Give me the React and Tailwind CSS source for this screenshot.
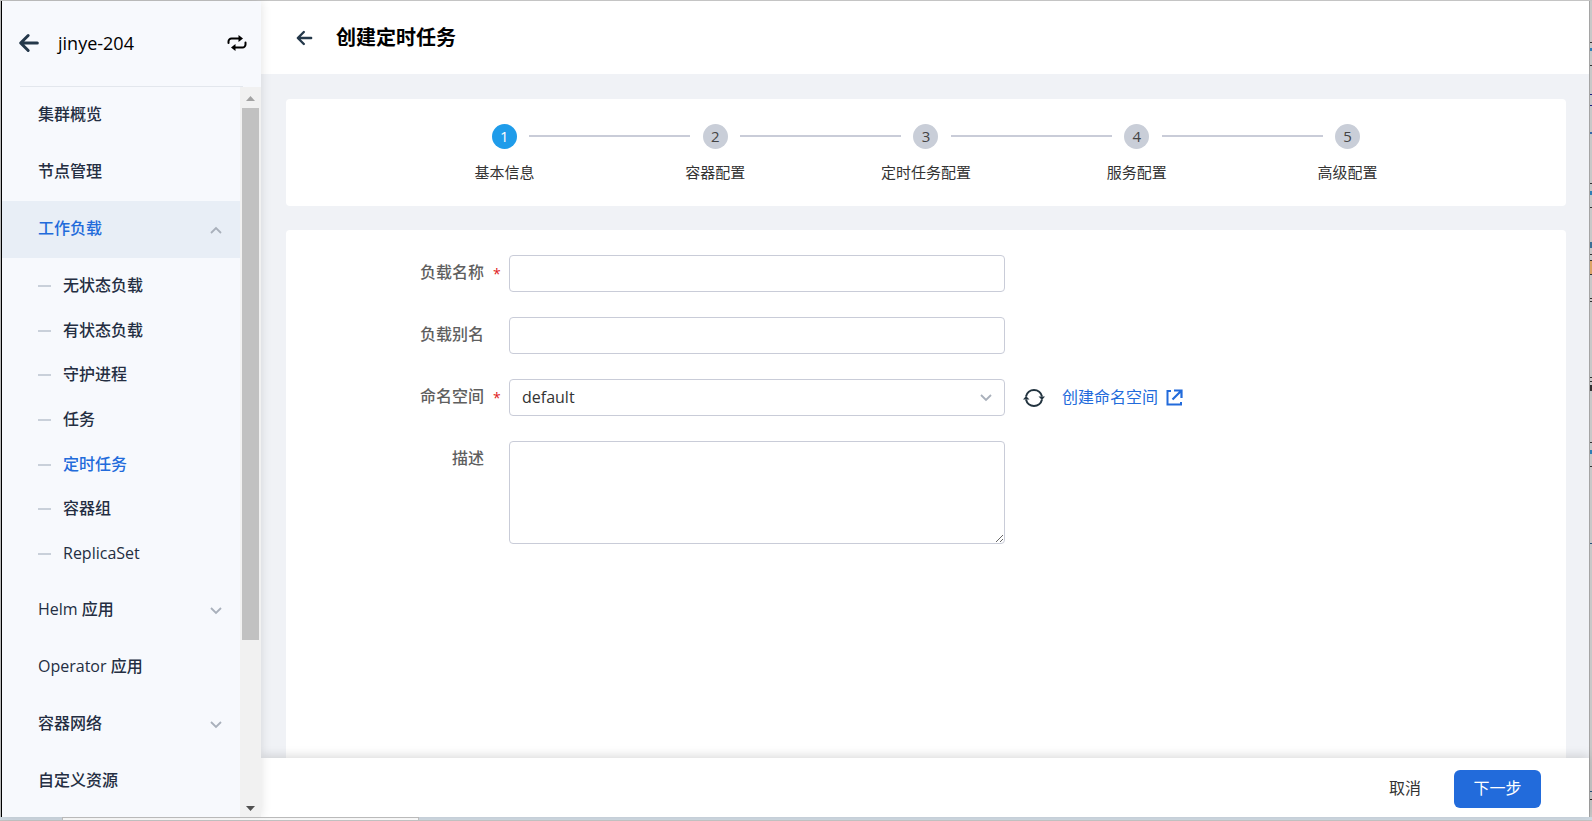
import { useState } from 'react'

const NAV_TOP = ['集群概览', '节点管理']

const WORKLOADS = ['无状态负载', '有状态负载', '守护进程', '任务', '定时任务', '容器组', 'ReplicaSet']

const NAV_BOTTOM = [
  { label: 'Helm 应用', expandable: true },
  { label: 'Operator 应用' },
  { label: '容器网络', expandable: true },
  { label: '自定义资源' },
]

const STEPS = ['基本信息', '容器配置', '定时任务配置', '服务配置', '高级配置']

// [top, height, colour] of what peeks out from the window behind
const EDGE_MARKS = [
  [42, 1, '#333'], [48, 3, '#2f7fb5'], [65, 1, '#333'], [94, 1, '#1a1a80'], [105, 1, '#1a1a80'],
  [132, 2, '#3568a8'], [183, 1, '#333'], [191, 4, '#2f7fb5'], [207, 1, '#333'], [242, 6, '#3c6f96'],
  [254, 1, '#333'], [260, 1, '#333'], [261, 13, '#dba467'], [274, 1, '#333'], [298, 1, '#333'],
  [301, 1, '#333'], [377, 1, '#333'], [381, 1, '#333'], [385, 6, '#333'], [442, 1, '#333'],
  [450, 4, '#2f7fb5'], [466, 1, '#333'], [543, 1, '#24517a'], [791, 1, '#24517a'], [799, 1, '#222'],
]

function ArrowLeft({ className }) {
  return (
    <svg
      viewBox="0 0 24 24"
      fill="none"
      stroke="currentColor"
      strokeWidth="3.6"
      strokeLinecap="round"
      strokeLinejoin="round"
      className={className}
    >
      <path d="M11 3L2 12l9 9M3 12h19" />
    </svg>
  )
}

function Chevron({ up = false }) {
  return (
    <svg viewBox="0 0 12 8" width="12" height="8" fill="none" stroke="#a9b0bb" strokeWidth="1.8">
      <path d={up ? 'M1 7l5-5 5 5' : 'M1 1l5 5 5-5'} />
    </svg>
  )
}

function SwapIcon() {
  return (
    <svg viewBox="0 0 20 16" width="20" height="16" fill="none" stroke="#000" strokeWidth="2" strokeLinecap="round">
      <path d="M1.500 8V6.500a3 3 0 013-3H12" />
      <path d="M18.500 7.500V9.500a3 3 0 01-3 3H8" />
      <path d="M11.500 0v7L16 3.500z" fill="#000" stroke="none" />
      <path d="M8.500 9v7L4 12.500z" fill="#000" stroke="none" />
    </svg>
  )
}

function RefreshIcon() {
  return (
    <svg viewBox="0 0 22 20" width="22" height="20" fill="none" stroke="#22333f" strokeWidth="2">
      <path d="M3 8.500A8.200 8.200 0 0119 8.500" />
      <path d="M19 11.500A8.200 8.200 0 013 11.500" />
      <path d="M0 11.500L3 8l3.500 3.500z" fill="#22333f" stroke="none" />
      <path d="M15.500 8.500H22L19 12z" fill="#22333f" stroke="none" />
    </svg>
  )
}

function ExternalIcon() {
  return (
    <svg viewBox="0 0 17 17" width="17" height="17" fill="none" stroke="currentColor" strokeWidth="2">
      <path d="M5 2H1.500v13.500H15V13" />
      <path d="M8 1.500h7.500V9M15.500 1.500L6.500 10.500" strokeWidth="2.200" />
    </svg>
  )
}

function NavItem({ label, expandable, active }) {
  return (
    <a
      href="#"
      className={`flex h-[57px] items-center justify-between pr-[18px] pl-9 ${
        active ? 'bg-[#e8eef6] text-[#226bdb]' : 'text-[#242e42]'
      }`}
    >
      <span className="pb-[3px]">{label}</span>
      {(expandable || active) && <Chevron up={active} />}
    </a>
  )
}

function Sidebar() {
  return (
    <aside className="z-20 flex w-[259px] shrink-0 flex-col bg-[#f7f9fd] shadow-[0_0_10px_rgba(0,0,0,0.12)]">
      <div className="flex h-[85px] shrink-0 items-center pr-[14px] pb-[2px] pl-4">
        <button aria-label="返回" className="text-[#24384a]">
          <ArrowLeft className="h-5 w-[22px]" />
        </button>
        <span className="ml-[18px] flex-1 text-lg text-black">jinye-204</span>
        <button aria-label="切换集群">
          <SwapIcon />
        </button>
      </div>
      <div className="mr-[18px] ml-[18px] h-px shrink-0 bg-[#e3e7ed]" />
      <div className="flex min-h-0 flex-1">
        <nav className="min-w-0 flex-1 overflow-hidden text-base font-medium">
          {NAV_TOP.map((label) => (
            <NavItem key={label} label={label} />
          ))}
          <NavItem label="工作负载" active />
          <div className="my-[6px] grid h-[312px] auto-rows-fr">
            {WORKLOADS.map((label) => (
              <a
                key={label}
                href="#"
                className={`flex items-center gap-3 pl-9 ${label === '定时任务' ? 'text-[#226bdb]' : 'text-[#242e42]'}`}
              >
                <span className="h-[2px] w-[13px] bg-[#c9d0da]" />
                <span className="pb-[2px]">{label}</span>
              </a>
            ))}
          </div>
          {NAV_BOTTOM.map((item) => (
            <NavItem key={item.label} {...item} />
          ))}
        </nav>
        <div className="flex w-[21px] shrink-0 flex-col items-center bg-[#f1f1f1]">
          <svg viewBox="0 0 21 21" width="21" height="21">
            <path d="M6 14h9l-4.500-5z" fill="#a3a3a3" />
          </svg>
          <div className="h-[532px] w-[17px] bg-[#c1c1c1]" />
          <svg viewBox="0 0 21 21" width="21" height="21" className="mt-auto">
            <path d="M6 10h9l-4.500 5z" fill="#505050" />
          </svg>
        </div>
      </div>
    </aside>
  )
}

function Steps({ current }) {
  return (
    <ol className="grid h-[107px] shrink-0 grid-cols-5 rounded bg-white px-[113px] pt-[25px] text-[15px] text-[#333]">
      {STEPS.map((label, i) => (
        <li key={label} className="relative flex flex-col items-center gap-[11px]">
          <span
            className={`flex h-[25px] w-[25px] items-center justify-center rounded-full ${
              i === current ? 'bg-[#1f9cea] text-white' : 'bg-[#c9ced8] text-[#444]'
            }`}
          >
            {i + 1}
          </span>
          <span className="leading-6">{label}</span>
          {i < STEPS.length - 1 && (
            <span className="absolute top-[11px] right-[calc(-50%+25px)] left-[calc(50%+25px)] h-[2px] bg-[#c9ccd8]" />
          )}
        </li>
      ))}
    </ol>
  )
}

function Field({ id, label, required, children }) {
  return (
    <div className="flex items-start">
      <label htmlFor={id} className="w-[198px] shrink-0 text-right font-medium leading-[34px] text-[#5f5f5f]">
        {label}
      </label>
      <span className="w-[25px] shrink-0 pl-[9px] text-sm leading-[37px] text-[#e02020]">{required && '*'}</span>
      {children}
    </div>
  )
}

function BasicForm() {
  const [form, setForm] = useState({ name: '', alias: '', namespace: 'default', desc: '' })
  const set = (key) => (e) => setForm({ ...form, [key]: e.target.value })

  const box = 'w-[496px] rounded border border-[#c9ccd8] bg-white px-3 text-base text-[#333] outline-none'

  return (
    <form className="flex min-h-0 flex-1 flex-col gap-[25px] overflow-hidden rounded-t bg-white pt-[25px]">
      <Field id="name" label="负载名称" required>
        <input id="name" value={form.name} onChange={set('name')} className={`${box} h-[37px]`} />
      </Field>
      <Field id="alias" label="负载别名">
        <input id="alias" value={form.alias} onChange={set('alias')} className={`${box} h-[37px]`} />
      </Field>
      <Field id="namespace" label="命名空间" required>
        <div className="relative">
          <select
            id="namespace"
            value={form.namespace}
            onChange={set('namespace')}
            className={`${box} h-[37px] appearance-none pb-[2px]`}
          >
            <option value="default">default</option>
          </select>
          <span className="pointer-events-none absolute top-[15px] right-[13px]">
            <Chevron />
          </span>
        </div>
        <button type="button" aria-label="刷新" className="ml-[18px] flex h-[37px] items-center">
          <RefreshIcon />
        </button>
        <a href="#" className="ml-[17px] flex h-[37px] items-center gap-2 text-[#226bdb]">
          <span className="pb-[2px]">创建命名空间</span>
          <ExternalIcon />
        </a>
      </Field>
      <Field id="desc" label="描述">
        <textarea id="desc" value={form.desc} onChange={set('desc')} className={`${box} h-[103px] resize`} />
      </Field>
    </form>
  )
}

export default function App() {
  return (
    <div className="flex h-screen flex-col border-t border-b border-[#c4c4c4] font-['Open_Sans','Noto_Sans_CJK_SC',sans-serif] text-base">
      <div className="flex min-h-0 flex-1">
        <div className="w-[2px] shrink-0 border-r border-black bg-[#c4c4c4]" />
        <Sidebar />
        <main className="flex min-w-0 flex-1 flex-col bg-[#f0f2f6]">
          <header className="flex h-[73px] shrink-0 items-center bg-white pl-[35px]">
            <button aria-label="返回" className="text-[#24384a]">
              <ArrowLeft className="h-4 w-[17px]" />
            </button>
            <h1 className="ml-[23px] text-xl font-bold text-black">创建定时任务</h1>
          </header>
          <div className="flex min-h-0 flex-1 flex-col gap-6 pt-[25px] pr-[23px] pl-[25px]">
            <Steps current={0} />
            <BasicForm />
          </div>
          <footer className="z-10 flex h-[59px] shrink-0 items-center justify-end gap-[33px] bg-white pt-[2px] pr-12 shadow-[0_-2px_10px_rgba(0,0,0,0.15)]">
            <button className="pb-[2px] text-[#333]">取消</button>
            <button className="h-[38px] w-[87px] rounded-md bg-[#226bdb] pb-[2px] text-white">下一步</button>
          </footer>
        </main>
        <div className="relative w-[3px] shrink-0 border-l border-[#a5a5a5] bg-[#c8c8c8]">
          <svg viewBox="0 0 2 816" width="2" height="816" className="absolute top-0 left-0">
            {EDGE_MARKS.map(([y, h, fill]) => (
              <rect key={y} y={y - 1} width="2" height={h} fill={fill} />
            ))}
          </svg>
        </div>
      </div>
      <div className="flex h-[3px] shrink-0 bg-[#d0dae3] pl-[62px]">
        <div className="w-[357px] border-x border-t border-[#c4c4c4] bg-white" />
      </div>
    </div>
  )
}
